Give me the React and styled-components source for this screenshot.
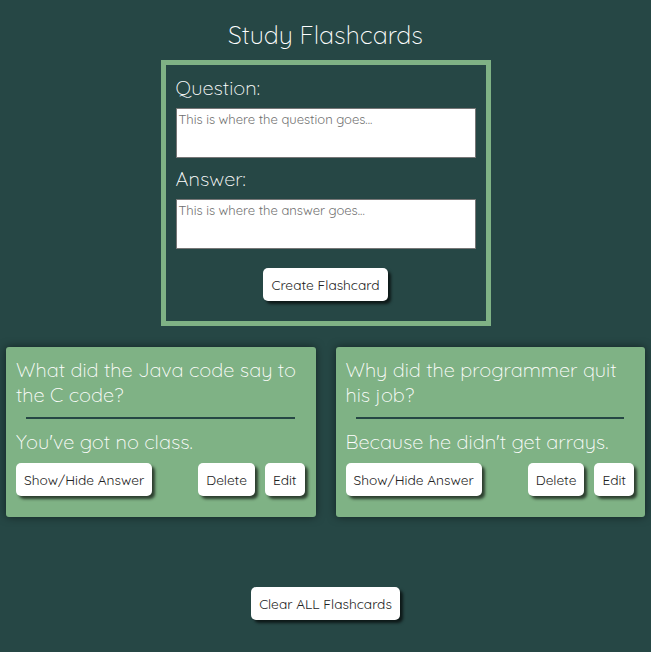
import React from 'react';
import styled, { createGlobalStyle } from 'styled-components';

const GlobalStyle = createGlobalStyle`
    body {
        margin: 0;
        background: #264745;
        font-family: Quicksand, Lato, 'Open Sans', sans-serif;
        font-weight: 300;
        color: #fff;
    }
`;

const cards = [
    { q: 'What did the Java code say to the C code?', a: "You've got no class." },
    { q: 'Why did the programmer quit his job?', a: "Because he didn't get arrays." },
];

const App = () => {
    return (
        <>
            <GlobalStyle />
            <Page>
                <Title>Study Flashcards</Title>
                <Form>
                    <Label>Question:</Label>
                    <TextArea placeholder="This is where the question goes..." />
                    <Label>Answer:</Label>
                    <TextArea placeholder="This is where the answer goes..." />
                    <CenterRow>
                        <Button>Create Flashcard</Button>
                    </CenterRow>
                </Form>
                <CardGrid>
                    {cards.map((c) => (
                        <Card key={c.q}>
                            <CardText>{c.q}</CardText>
                            <Divider />
                            <CardText>{c.a}</CardText>
                            <ButtonRow>
                                <Button>Show/Hide Answer</Button>
                                <Spacer />
                                <Button>Delete</Button>
                                <Button>Edit</Button>
                            </ButtonRow>
                        </Card>
                    ))}
                </CardGrid>
                <Button>Clear ALL Flashcards</Button>
            </Page>
        </>
    );
};

export default App;

const Page = styled.div`
    display: flex;
    flex-direction: column;
    align-items: center;
    padding: 19px 0 30px;
`;

const Title = styled.h1`
    margin: 0 0 9px;
    font-size: 25px;
    font-weight: 300;
    line-height: 32px;
`;

const Form = styled.div`
    width: 300px;
    padding: 10px 10px 20px;
    border: 5px solid #7fb285;
    display: flex;
    flex-direction: column;
`;

const Label = styled.div`
    font-size: 20px;
    line-height: 26px;
    margin-bottom: 7px;
`;

const TextArea = styled.textarea`
    width: 300px;
    height: 50px;
    box-sizing: border-box;
    border: 1px solid #767676;
    padding: 2px;
    resize: none;
    font-family: Quicksand, Lato, 'Open Sans', sans-serif;
    font-weight: 400;
    font-size: 13px;
    margin-bottom: 8px;
    &::placeholder {
        color: #6f6f6f;
    }
`;

const CenterRow = styled.div`
    display: flex;
    justify-content: center;
    margin-top: 11px;
`;

const Button = styled.button`
    height: 33px;
    padding: 0 8px;
    background: #fff;
    color: #222;
    border: none;
    border-radius: 5px;
    box-shadow: 3px 3px 3px rgba(0, 0, 0, 0.65);
    font-family: Quicksand, Lato, 'Open Sans', sans-serif;
    font-weight: 400;
    font-size: 13.7px;
    cursor: pointer;
`;

const CardGrid = styled.div`
    align-self: stretch;
    display: grid;
    grid-template-columns: 1fr 1fr;
    gap: 20px;
    padding: 0 6px 0 6px;
    margin: 21px 0 70px;
`;

const Card = styled.div`
    background: #7fb285;
    border-radius: 3px;
    padding: 10px 11px 21px 10px;
    box-shadow: 0 0 8px rgba(0, 0, 0, 0.5);
`;

const CardText = styled.div`
    font-size: 20px;
    line-height: 25px;
`;

const Divider = styled.hr`
    border: none;
    height: 2px;
    background: #264745;
    margin: 10px 10px 10px;
`;

const ButtonRow = styled.div`
    display: flex;
    gap: 10px;
    margin-top: 9px;
`;

const Spacer = styled.div`
    flex: 1;
`;
